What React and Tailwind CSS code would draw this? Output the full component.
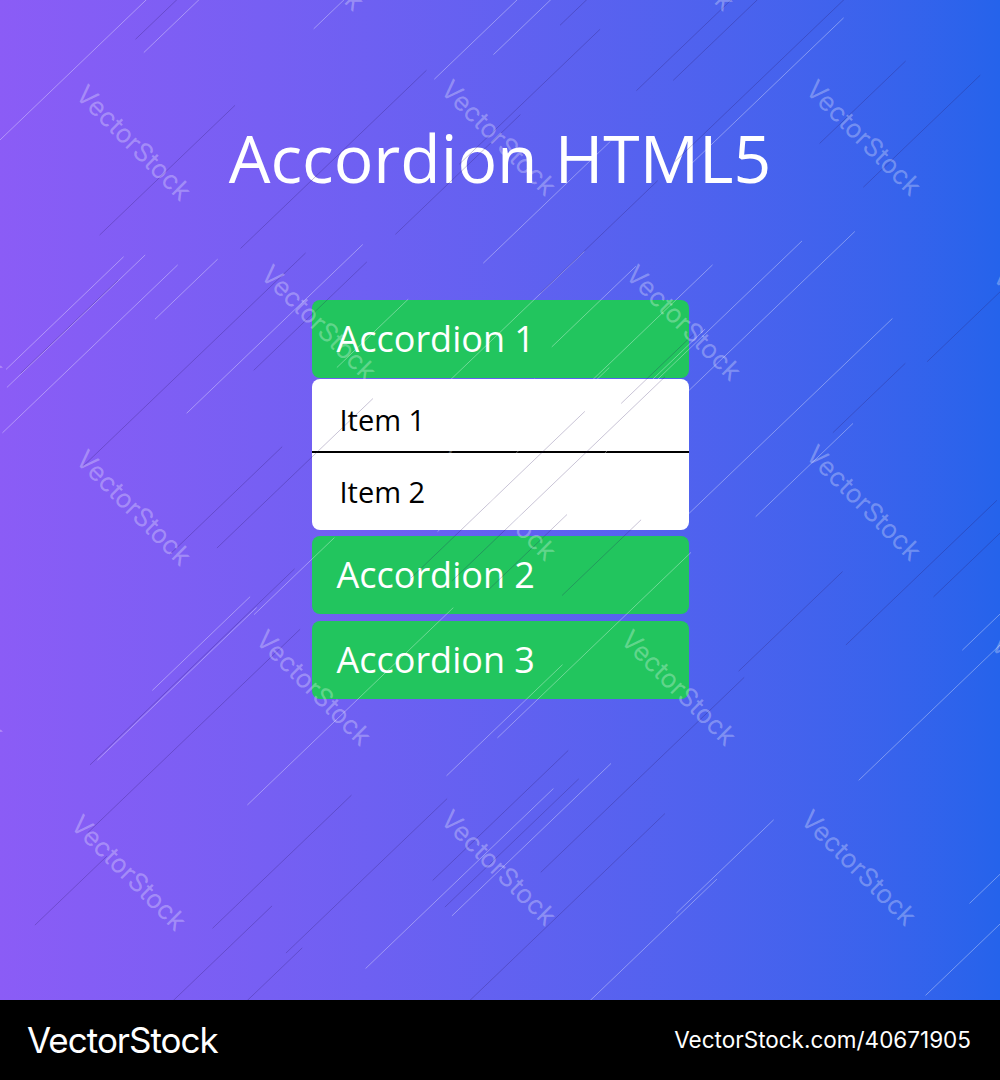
import React from 'react';

const SANS = { fontFamily: '"Open Sans", "Noto Sans", sans-serif' };
const FOOT = { fontFamily: 'Inter, "Liberation Sans", sans-serif' };

// watermark centres, one grid offset every other row
const MARKS = [
  [308, -50], [678, -50],
  [135, 140], [500, 135], [865, 135],
  [-52, 316], [320, 320], [685, 320], [1052, 322],
  [135, 505], [500, 500], [865, 500],
  [-52, 680], [315, 685], [680, 685], [1050, 690],
  [130, 870], [500, 865], [860, 865],
];

// thin diagonal strokes scattered over the backdrop
const LINES = (() => {
  const out = [];
  let s = 7;
  const rnd = () => { s = (s * 9301 + 49297) % 233280; return s / 233280; };
  for (let i = 0; i < 80; i++) {
    const x = rnd() * 1100 - 50;
    const y = rnd() * 1050;
    const len = 80 + rnd() * 240;
    out.push({ x, y, len, light: rnd() > 0.45 });
  }
  return out;
})();

const Header = ({ children }) => (
  <div className="h-[78px] bg-[#22c55e] rounded-lg flex items-center pl-[25px] text-white text-[36px]" style={SANS}>
    {children}
  </div>
);

export default function App() {
  return (
    <div className="w-[1000px] h-[1080px] flex flex-col overflow-hidden">
      <div className="relative h-[1000px] overflow-hidden bg-gradient-to-r from-[#8b5cf6] to-[#2563eb] flex flex-col items-center">
        <svg className="absolute inset-0 pointer-events-none" width="1000" height="1000">
          {LINES.map((l, i) => (
            <line
              key={i}
              x1={l.x}
              y1={l.y}
              x2={l.x + l.len * 0.72}
              y2={l.y - l.len * 0.69}
              stroke={l.light ? 'rgba(255,255,255,0.35)' : 'rgba(40,20,90,0.25)'}
              strokeWidth="1"
            />
          ))}
        </svg>

        <h1 className="mt-[124px] text-white text-[66px] leading-none" style={SANS}>Accordion HTML5</h1>

        <div className="mt-[110px] w-[377px] flex flex-col">
          <Header>Accordion 1</Header>
          <div className="mt-px bg-white rounded-lg flex flex-col text-black text-[29px]" style={SANS}>
            <div className="h-[74px] flex items-center pl-[28px] pt-[9px] border-b-2 border-black">Item 1</div>
            <div className="h-[77px] flex items-center pl-[28px]">Item 2</div>
          </div>
          <div className="mt-[6px]"><Header>Accordion 2</Header></div>
          <div className="mt-[7px]"><Header>Accordion 3</Header></div>
        </div>

        {MARKS.map(([x, y], i) => (
          <div
            key={i}
            className="absolute pointer-events-none text-[26px] text-white/30 whitespace-nowrap"
            style={{ ...FOOT, left: x - 76, top: y - 17, transform: 'rotate(45deg)' }}
          >
            VectorStock
          </div>
        ))}
      </div>

      <div className="h-[80px] bg-black flex items-center justify-between pl-[27px] pr-[29px] text-white" style={FOOT}>
        <span className="text-[35px] tracking-[-1px]">VectorStock</span>
        <span className="text-[22.5px]">VectorStock.com/40671905</span>
      </div>
    </div>
  );
}
